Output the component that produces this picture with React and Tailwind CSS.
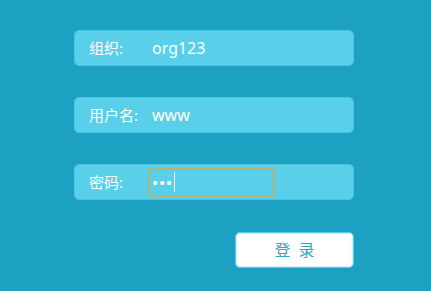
export default function App() {
  const rows = [
    { label: '组织:', value: 'org123' },
    { label: '用户名:', value: 'www' },
  ];

  return (
    <div
      className="h-[291px] w-[431px] overflow-hidden bg-[#1ca1c2] pl-[74px] pt-[30px]"
      style={{ fontFamily: '"Noto Sans", "Noto Sans CJK SC", sans-serif' }}
    >
      <div className="flex w-[280px] flex-col gap-[31px]">
        {rows.map((row) => (
          <div
            key={row.label}
            className="flex h-[36px] items-center rounded-[5px] border border-[#49c3e0] bg-[#5acfe9] pl-[14px] text-white"
          >
            <span className="w-[63px] text-[15px]">{row.label}</span>
            <span className="text-[16px]">{row.value}</span>
          </div>
        ))}

        <div className="flex h-[36px] items-center rounded-[5px] border border-[#49c3e0] bg-[#5acfe9] pl-[14px] text-white">
          <span className="w-[59px] text-[15px]">密码:</span>
          <div className="flex h-[29px] w-[127px] items-center rounded-[2px] border-2 border-[#b2b475] pl-[2px]">
            <span className="text-[17px] leading-none tracking-[0.5px]">•••</span>
            <span className="ml-[1px] h-[20px] w-px bg-white" />
          </div>
        </div>
      </div>

      <div className="mt-[32px] flex w-[280px] justify-end">
        <button
          type="button"
          className="flex h-[36px] w-[119px] items-center justify-center rounded-[5px] border border-[#5cc7e2] bg-white text-[16px] tracking-[2px] text-[#2ca6c6] shadow-[inset_0_0_0_1px_#d4f0f8]"
        >
          <span className="pl-[2px]">登 录</span>
        </button>
      </div>
    </div>
  );
}
